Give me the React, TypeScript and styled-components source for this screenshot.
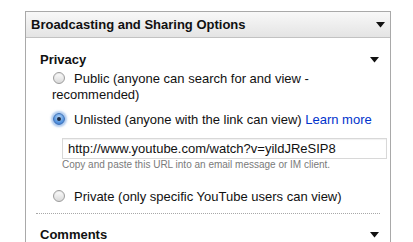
import React from "react";
import styled, {createGlobalStyle} from "styled-components";

const GlobalStyle = createGlobalStyle`
  html, body {
    margin: 0;
    padding: 0;
    background: #fff;
  }

  body {
    font-family: "Liberation Sans", Arial, sans-serif;
    color: #111;
  }
`;

const Page = styled.div`
  padding: 11px 20px 0 25px;
  height: 231px;
  overflow: hidden;
`;

const Panel = styled.div`
  width: 366px;
  height: 240px;
  border: 1px solid #a9a9a9;
  border-bottom: none;
  box-sizing: border-box;
`;

const PanelHeader = styled.div`
  height: 25px;
  display: flex;
  align-items: center;
  justify-content: space-between;
  padding: 0 5px 0 5px;
  background: linear-gradient(#f8f8f8, #e4e4e4);
  border-bottom: 1px solid #c2c2c2;
`;

const HeaderTitle = styled.span`
  font-size: 13px;
  font-weight: bold;
  color: #111;
`;

const PanelBody = styled.div`
  padding: 14px 10px 0 14px;
`;

const SectionRow = styled.div`
  display: flex;
  align-items: center;
  justify-content: space-between;
  height: 16px;
  padding-right: 1px;
`;

const SectionTitle = styled.span`
  font-size: 13px;
  font-weight: bold;
  line-height: 16px;
  color: #111;
`;

const Options = styled.div`
  padding: 3px 0 0 12px;
`;

const Option = styled.label<{ $gap?: number }>`
  display: block;
  margin-top: ${({$gap}) => $gap ?? 0}px;
  font-size: 13px;
  line-height: 16px;
  color: #111;
  white-space: normal;
`;

const Radio = styled.span<{ $checked?: boolean }>`
  display: inline-block;
  box-sizing: border-box;
  width: 12px;
  height: 12px;
  margin: 0 9px 0 1px;
  vertical-align: -1px;
  border-radius: 50%;
  position: relative;
  border: 1px solid ${({$checked}) => ($checked ? "#3a6fb8" : "#9c9c9c")};
  background: ${({$checked}) =>
    $checked
      ? "radial-gradient(circle at 50% 35%, #bcd8f6, #5d9ae0 55%, #2f6fcf)"
      : "linear-gradient(#fdfdfd, #d9d9d9)"};
  box-shadow: ${({$checked}) =>
    $checked ? "0 0 2px 2px rgba(110, 160, 225, 0.55)" : "inset 0 1px 1px rgba(0,0,0,0.08)"};

  &::after {
    content: "";
    display: ${({$checked}) => ($checked ? "block" : "none")};
    position: absolute;
    left: 3px;
    top: 3px;
    width: 4px;
    height: 4px;
    border-radius: 50%;
    background: #1b2a44;
  }
`;

const Link = styled.a`
  color: #0033cc;
  text-decoration: none;
  white-space: nowrap;
`;

const UrlBlock = styled.div`
  margin: 10px 0 0 10px;
`;

const UrlInput = styled.input`
  display: block;
  box-sizing: border-box;
  width: 325px;
  height: 21px;
  margin: 0;
  padding: 0 5px;
  border: 1px solid #d8d8d8;
  box-shadow: inset 0 1px 1px rgba(0, 0, 0, 0.06);
  font-family: "Liberation Sans", Arial, sans-serif;
  font-size: 13px;
  color: #111;
  outline: none;
`;

const Hint = styled.div`
  font-size: 10px;
  line-height: 12px;
  color: #7a7a7a;
`;

const Divider = styled.div`
  margin: 8px 0 0 -4px;
  border-top: 1px dotted #a8a8a8;
`;

const NextSection = styled.div`
  margin-top: 13px;
`;

const Caret = () => (
    <svg width="9" height="6" viewBox="0 0 9 6">
        <path d="M0 0 H9 L4.5 5.5 Z" fill="#111"/>
    </svg>
);

const App = () => {
    const url = "http://www.youtube.com/watch?v=yildJReSIP8";

    return <>
        <GlobalStyle/>
        <Page>
            <Panel>
                <PanelHeader>
                    <HeaderTitle>Broadcasting and Sharing Options</HeaderTitle>
                    <Caret/>
                </PanelHeader>
                <PanelBody>
                    <SectionRow>
                        <SectionTitle>Privacy</SectionTitle>
                        <Caret/>
                    </SectionRow>
                    <Options>
                        <Option>
                            <Radio/>Public (anyone can search for and view - recommended)
                        </Option>
                        <Option $gap={9}>
                            <Radio $checked/>Unlisted (anyone with the link can view) <Link href="#">Learn more</Link>
                        </Option>
                        <UrlBlock>
                            <UrlInput readOnly value={url}/>
                            <Hint>Copy and paste this URL into an email message or IM client.</Hint>
                        </UrlBlock>
                        <Option $gap={18}>
                            <Radio/>Private (only specific YouTube users can view)
                        </Option>
                    </Options>
                    <Divider/>
                    <NextSection>
                        <SectionRow>
                            <SectionTitle>Comments</SectionTitle>
                            <Caret/>
                        </SectionRow>
                    </NextSection>
                </PanelBody>
            </Panel>
        </Page>
    </>;
};

export default App;
